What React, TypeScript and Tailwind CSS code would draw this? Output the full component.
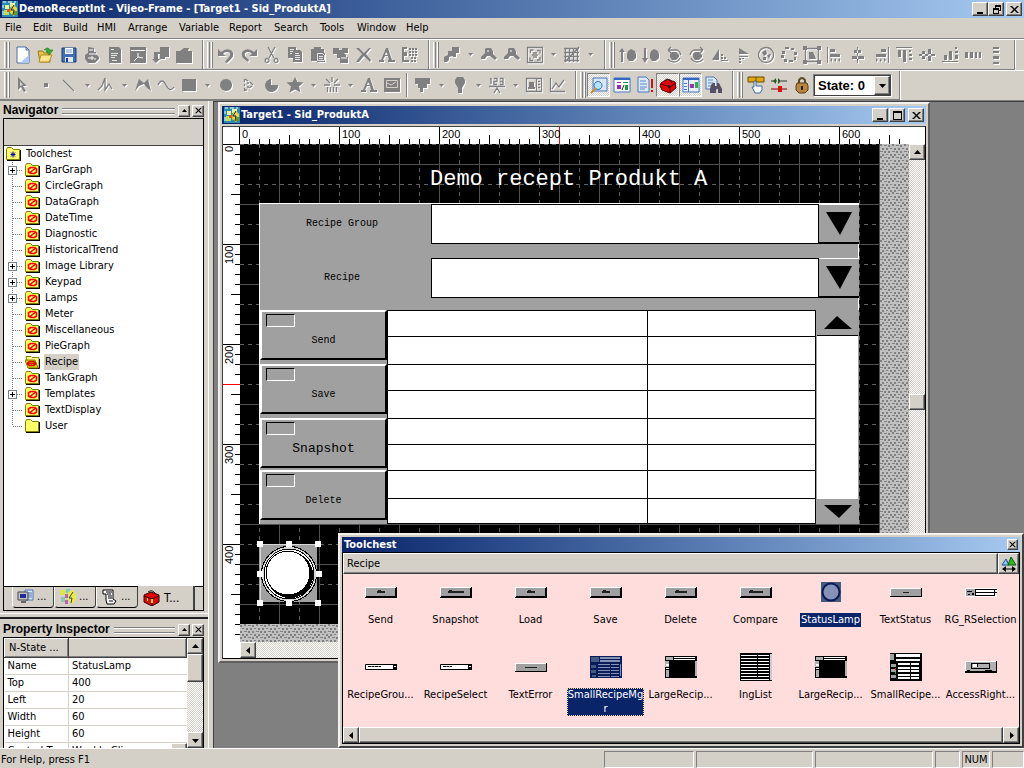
import React from 'react';

const raised = 'border border-t-white border-l-white border-r-[#404040] border-b-[#404040] bg-[#d4d0c8] shadow-[inset_-1px_-1px_0_#808080]';
const checker = 'bg-[repeating-conic-gradient(#ffffff_0_25%,#d4d0c8_0_50%)] bg-[length:2px_2px]';
const uiFont = "font-['DejaVu_Sans_Condensed','Liberation_Sans',sans-serif]";
const titleFont = 'text-[11px] font-bold';
const titleGradient = 'bg-linear-to-r from-[#0a246a] to-[#a6caf0]';

type Glyph = { fill?: string; line?: string; art?: React.ReactNode };

// All toolbar glyphs are drawn in an 18x18 box
const glyphs: Record<string, Glyph> = {
  new: { art: <><path d="M3 1h9l3 3v13H3z" fill="#fff" stroke="#4a6ea8" /><path d="M15 9v8H6z" fill="#a9c8f5" /><path d="M12 1v3h3z" fill="#dce9fb" stroke="#4a6ea8" /></> },
  open: { art: <><path d="M1 5h5l1 2h6v9H3z" fill="#e8c24a" stroke="#a07a18" /><path d="M4 9h11l-3 7H2z" fill="#fbe68c" stroke="#b58d22" /><path d="M7 4q4-4 6 0h3l-4 5-3-4h2" fill="#38a832" stroke="#1c7a1c" strokeWidth=".6" /></> },
  save: { art: <><path d="M2 2h14v14H2z" fill="#3f6fb5" stroke="#173f7e" /><path d="M5 2h8v6H5z" fill="#fff" /><path d="M6 4h6M6 6h6" stroke="#7a9ac8" /><path d="M5 11h8v5H5z" fill="#dfe6ee" /><path d="M6 12h2v4H6z" fill="#173f7e" /></> },
  print: { fill: 'M5 1l6 1v4h2v2l3 3v2l-4 4H5l-3-4V9l3-2z', art: <path d="M6 4h4M8 11h2v2H8zM11 13h2M5 12h2M6 8h7" stroke="#fff" /> },
  preview: { fill: 'M3 1h10l2 2v14H3z', art: <path d="M5 3.500h3M5 7.500h7M5 9.500h6M5 11.500h4M6 14.500h5" stroke="#fff" strokeWidth=".8" /> },
  frame: { fill: 'M1 1h16v16H1z', art: <path d="M2 4.500h14M9 7v4l-4 4M9 11l5 1" stroke="#fff" /> },
  download: { fill: 'M8 1h9v10h-4v2H8V8H6v5h2l-4 4-4-4h2V6h6z' },
  bag: { fill: 'M1 5h4l4-3h5l-1 3h4v12H1z' },
  undo: { fill: 'M1 3l3 3q6-5 11-1 3 4-1 8l-4 4-2-1 4-5q3-5-2-5-3 0-4 2l3 2H1z' },
  redo: { fill: 'M17 3l-3 3Q8 1 3 5q-3 4 1 8l4 3 1-2-4-4q-1-4 3-4 3 0 4 2l-3 2h8z' },
  cut: { line: 'M5 1l6 11M12 1L6 12M4 12.5a2 2 0 1 0 .1 0M13 12.5a2 2 0 1 0 .1 0' },
  copy: { fill: 'M2 1h8v3h4l2 2v10H7v-4H2z', art: <path d="M4 3.500h4M4 5.500h3M4 7.500h2M9 7.500h4M9 9.500h5M9 11.500h5M9 13.500h5" stroke="#fff" strokeWidth=".8" /> },
  paste: { fill: 'M2 3h3V1h7v2h3v3l1 2v8H8v-1H2z', art: <path d="M8.500 7.500h5l2 2v5h-7zM10 10.500h4M10 12.500h4" stroke="#fff" strokeWidth=".8" /> },
  dup: { fill: 'M1 2h6v2h3V2h6v5h-4l2 2v2h2v6H8v-5H5V8H1z', art: <path d="M9 12h6" stroke="#fff" /> },
  del: { fill: 'M1 2h3l5 5 5-5h2l-5 6 5 6-1 2-6-6-5 6H1l6-8z' },
  fontA: { fill: 'M8 2h2l4 12h3v2h-7v-2h1l-1-4H7l-2 4h1v2H1v-2h2zM8 6l-1 3h3z' },
  gridcopy: { fill: 'M1 1h5v2H3v3h3v4H3v4h5v2H1zM8 2h2v2H8zm3 0h2v2h-2zm3 0h2v2h-2zM8 5h2v2H8zm3 0h2v2h-2zm3 0h2v2h-2zM8 8h2v2H8zm3 0h2v2h-2zm3 0h2v2h-2zM10 11h2v2h-2zm3 0h2v2h-2zm-3 3h2v2h-2zm3 0h2v2h-2z' },
  zoomsel: { fill: 'M9 1h7v6h-3v4h-3v-1l-4 1v3l-2 2H1v-5l4-2V5h4z' },
  zoom: { fill: 'M6 2h5l2 3v3l4 4-2 2-5-4H7l-2 3H1v-2l4-4V3z', art: <path d="M7 5h2" stroke="#fff" /> },
  fit: { line: 'M1.500 1.500h15v15h-15zM4.500 7v-3h3M11 4.500h3v3M14 11v3h-3M7 14.500h-3v-3M7 7h4M7 11h4M6 9h6' },
  grid: { line: 'M1 2.500h15M1 6.500h15M1 10.500h15M1 14.500h15M2.500 2v14M6.500 2v14M10.500 2v14M14.500 2v14M2 16L16 1' },
  front: { fill: 'M3 2l3 4H4v10H2V6H0zM9 5l3-2 4 2 1 3v4l-3 3h-4l-2-3V8z' },
  back: { fill: 'M2 2h2v10h2l-3 5-3-5h2zM9 5l3-2 4 2 1 3v4l-3 3h-4l-2-3V8z' },
  rotl: { fill: 'M7 6h4l3 3v2l-3 3H7l-2-3V8z', line: 'M3 4l3-3M3 4l3 3M3 4h9q3 1 4 5M15 12q-2 4-6 4t-6-3' },
  rotr: { fill: 'M7 6h4l3 3v2l-3 3H7l-2-3V8z', line: 'M15 4l-3-3M15 4l-3 3M15 4H6Q3 5 2 9M3 12q2 4 6 4t6-3' },
  fliph: { fill: 'M8 3v11H1zM10 8h2v2h-2zm0 3h2v2h-2zm3 0h2v2h-2zm-3 3h7v1h-7z' },
  flipv: { fill: 'M5 2l10 6H5zM5 10h9v1H5zm0 2h2v2H5zm3 0h2v1H8zm-3 3h2v2H5z' },
  group: { fill: 'M5 6l4-2 1 4-3 2zM10 9l4-1-2 5zM6 11h3v3H6z', line: 'M9 1.500a7.500 7.500 0 1 0 .1 0' },
  ungroup: { fill: 'M5 1h4v2H5zm6 1h3v2h-3zM14 6h3v3h-3zm0 5h2v3h-2zM9 14h4v2H9zM4 13h3v3H4zM1 9h3v3H1zm1-4h3v3H2z' },
  edit: { fill: 'M0 0h4v4H0zM14 0h4v4h-4zM0 14h4v4H0zM14 14h4v4h-4zM6 6h4l2 4 1 3H6z', line: 'M2.500 2.500h13v13h-13z' },
  alignl: { fill: 'M1 1h1v16H1zM4 3h5v3H4zm0 5h10v3H4zM4 14l2-2v4zm4 0l2-2v4zm4 0l2-2v4z' },
  alignc: { fill: 'M8 1h1v16H8zM5 4h7v3H5zM3 10h12v3H3z' },
  alignr: { fill: 'M16 1h1v16h-1zM9 3h5v3H9zM4 8h10v3H4zM4 12l2 2-2 2zm4 0l2 2-2 2zm4 0l2 2-2 2z' },
  alignt: { fill: 'M1 1h16v1H1zM3 4h3v7H3zm5 0h3v12H8zm6 0h2v2h-2zm0 4h3v2h-3zm0 4h3v2h-3z' },
  alignm: { fill: 'M1 8h16v2H1zM4 5h3v8H4zM10 3h3v12h-3z' },
  alignb: { fill: 'M1 15h16v1H1zM3 9h3v5H3zm5-4h3v9H8zm6-4h2v2h-2zm0 4h3v2h-3zm0 4h3v4h-3z' },
  spaceh: { fill: 'M1 6h3v6H1zm5 0h3v6H6zm5 0h2v6h-2zm4 0h2v6h-2z' },
  spacev: { fill: 'M6 1h6v2H6zm0 4h6v2H6zm0 5h6v3H6zm0 6h6v2H6z' },
  cursor: { fill: 'M4 1l9 9H9l3 5-2 1-3-5-3 3z', art: <path d="M6 5v5l3-1z" fill="#d4d0c8" /> },
  dot: { fill: 'M7 7h4v4H7z' },
  lineTool: { line: 'M3 4l11 11' },
  polyline: { line: 'M1 14l4-4 3-8v12l4-6 3 5' },
  polygon: { fill: 'M1 15l4-12 5 4 4-4 3 12-4-3-3-4-5 2z' },
  curve: { line: 'M1 9q4-8 8 0t8 2' },
  rect: { fill: 'M2 3h14v12H2z' },
  circle: { fill: 'M9 3a6 6 0 1 0 .1 0' },
  arc: { line: 'M4.500 3v3M4.500 8v2M4.500 12v3M5 3l3 2M10 6l3 3M12 10l-3 2M7 7h2M7 11h2M5 14h2' },
  pie: { fill: 'M8 3v6h7a6.500 6.500 0 1 1-7-6z' },
  star: { fill: 'M9 1l2.500 5 6 .5-4.500 4 1.500 6L9 13.500 3.500 16.500l1.500-6-4.500-4 6-.5z' },
  rays: { line: 'M9 1v5M3 3l4 4M15 3l-4 4M1 9h6M11 9h6M4.500 11v5M7.500 11v5M10.500 11v5M13.500 11v5' },
  image: { fill: 'M1 2h16v14H1z', art: <path d="M3.500 4.500h11v7h-11zM4 7l4 2 5-3" stroke="#d4d0c8" /> },
  tank: { fill: 'M1 2h15v6h-3v4H9v4H6v-4H4V8H1z' },
  lamp: { fill: 'M6 1h6l2 3v3l-3 5v5H7v-5L4 7V4z' },
  number: { line: 'M3 2v6M2 3h1M6 2.500h3v3H6v3h3M12 2.500h3v6h-3M12 5.500h3M1 10.500h16M6 17l3-5 3 5' },
  panel: { line: 'M1.500 2.500h15v13h-15zM11.500 2v14M13 5.500h2M13 8.500h2M13 11.500h2', fill: 'M4 6h5v5h1v2H3v-2h1z' },
  chart: { line: 'M2.500 2v13.500H17M4 13l4-6 3 4 5-7' },
  find: { art: <><path d="M3 2h14v13H3z" fill="#d7e6fb" stroke="#4b77b9" /><path d="M8 5.500a4 4 0 1 0 .1 0" fill="#b9e1fb" stroke="#2a77b8" /><path d="M6 12l-5 5" stroke="#c98a3c" strokeWidth="2" /></> },
  script: { art: <><path d="M1 2h16v14H1z" fill="#fff" stroke="#4777c5" /><path d="M1 3h16" stroke="#3267c5" strokeWidth="2" /><path d="M4 6.500h4" stroke="#a32bb5" /><path d="M10 6.500h5" stroke="#1c9a3c" /><path d="M12 9h3v5h-3z" fill="#1c9a3c" /><path d="M11 9l-2 5" stroke="#333" /><path d="M4 9h4v4H4z" fill="#8f2bc0" /></> },
  report: { art: <><path d="M2 1h8l3 3v12H2z" fill="#dce9fb" stroke="#4b77b9" /><path d="M4 5h6M4 8h7M4 11h7M4 13h5" stroke="#5b87c9" /><path d="M15 3h2v9h-2zM15 14h2v2h-2z" fill="#d01010" /></> },
  toolbox: { art: <><path d="M2 7l6-4 8 3 1 6-6 5-8-3-2-4z" fill="#e00808" stroke="#600" /><path d="M2 8l9 3 6-4M11 11v5" stroke="#500" /><path d="M6 5q4-4 7 2" stroke="#222" /><path d="M9 9h2v3H9z" fill="#222" /></> },
  layout: { art: <><path d="M1 2h16v14H1z" fill="#e8f0fc" stroke="#4777c5" /><path d="M1 3h16" stroke="#3267c5" strokeWidth="2" /><path d="M6.500 4v12M2 7.500h3M2 10.500h3M2 13.500h3" stroke="#4777c5" /><path d="M8 8h4v4H8z" fill="#a32bb5" /><path d="M13 6h3v6h-3z" fill="#22b83c" /></> },
  search: { art: <><path d="M1 1h8l3 3v9H1z" fill="#dce9fb" stroke="#4b77b9" /><path d="M3 4h5M3 7h6M3 10h4" stroke="#5b87c9" /><path d="M6 9l2-2h2v3h2V7h2l3 6v4h-4v-4h-2v4H5v-4z" fill="#555063" /></> },
  io: { art: <><path d="M1 1h16v5H1z" fill="#e0a808" stroke="#6a4a00" /><path d="M9 1v5" stroke="#6a4a00" /><path d="M7 5h2v5h6v4l-2 3H8l-3-6h2z" fill="#fff" stroke="#3e6a9c" /></> },
  link: { art: <><path d="M1 5h6M11 5h6" stroke="#333" /><path d="M3 5l3-3v6zM8 2l3 3-3 3z" fill="#2a5a22" /><path d="M1 13h16" stroke="#800" /><path d="M8 10h4v6H8z" fill="#e01010" /></> },
  lock: { art: <><path d="M6 8V4q3-4 6 0v4" stroke="#5a4a28" strokeWidth="2" /><path d="M4 7h10l1 3v4l-3 3H6l-3-3v-4z" fill="#b8863c" stroke="#5c3c10" /><path d="M8 10h2v4H8z" fill="#222" /></> },
};

const GlyphIcon = ({ name }: { name: string }) => {
  const g = glyphs[name];
  const shadow = g.fill || g.line ? 'drop-shadow-[1px_1px_0_#ffffff]' : '';
  return (
    <svg width="18" height="18" viewBox="0 0 18 18" fill="none" className={`text-[#808080] ${shadow}`}>
      {g.fill && <path d={g.fill} fill="currentColor" fillRule="evenodd" />}
      {g.line && <path d={g.line} stroke="currentColor" strokeWidth="1.3" />}
      {g.art}
    </svg>
  );
};

const Caret = () => (
  <svg width="5" height="3" viewBox="0 0 5 3" className="drop-shadow-[1px_1px_0_#ffffff]"><path d="M0 0h5L2.500 3z" fill="#808080" /></svg>
);

// "v" is a drop-down caret, "|" a divider, a leading "*" marks a pressed button
const Tool = ({ name }: { name: string }) => {
  if (name === 'v') return <button aria-label="More" className="flex h-6 w-[14px] items-center justify-center"><Caret /></button>;
  if (name === '|') return <span className="mx-[3px] h-6 w-[2px] border-l border-l-[#808080] bg-white" />;
  const pressed = name.startsWith('*');
  const id = pressed ? name.slice(1) : name;
  return (
    <button aria-label={id} className={`flex h-6 w-[23px] items-center justify-center ${pressed ? `border border-t-[#808080] border-l-[#808080] border-r-white border-b-white ${checker}` : ''}`}>
      <GlyphIcon name={id} />
    </button>
  );
};

const ToolGroup = ({ tools, children }: { tools: string[]; children?: React.ReactNode }) => (
  <div className="flex items-center border-r border-b border-[#808080] pr-[7px] pl-1 shadow-[1px_0_0_#ffffff]">
    <span className="mr-px flex h-[26px] w-[6px] gap-[1px]">
      <i className="w-[3px] border-r border-l border-r-[#808080] border-l-white" />
      <i className="w-[3px] border-r border-l border-r-[#808080] border-l-white" />
    </span>
    {tools.map((t, i) => <Tool key={i} name={t} />)}
    {children}
  </div>
);

const Arrow = ({ dir }: { dir: 'up' | 'down' | 'left' | 'right' }) => {
  const d = { up: 'M0 5h7L3.500 1z', down: 'M0 2h7L3.500 6z', left: 'M5 0v7L1 3.500z', right: 'M2 0v7l4-3.500z' }[dir];
  return <svg width="7" height="7" viewBox="0 0 7 7"><path d={d} fill="#000" /></svg>;
};

const ScrollButton = ({ dir }: { dir: 'up' | 'down' | 'left' | 'right' }) => (
  <button aria-label={`Scroll ${dir}`} className={`flex size-4 shrink-0 items-center justify-center ${raised}`}><Arrow dir={dir} /></button>
);

const winMarks: Record<string, string> = {
  Minimize: 'M1 7h6v2H1z',
  Restore: 'M3 0h6v6H7v3H1V3h2zM4 2v1h3v2h1V2zM2 5v3h4V5z',
  Maximize: 'M0 0h9v9H0zM1 2v6h7V2z',
  Close: 'M0 1h2l2.500 2.500L7 1h2L5.500 4.500 9 8H7L4.500 5.500 2 8H0l3.500-3.500z',
};

const WinButton = ({ kind, className = 'h-[14px] w-4', mark = 9 }: { kind: string; className?: string; mark?: number }) => (
  <button aria-label={kind} className={`flex shrink-0 items-center justify-center ${raised} ${className}`}>
    <svg width={mark} height={mark} viewBox="0 0 9 9"><path d={winMarks[kind]} fillRule="evenodd" /></svg>
  </button>
);

const AppIcon = () => (
  <svg width="16" height="16" viewBox="0 0 16 16">
    <path d="M0 0h16v16H0z" fill="#2a8ab0" />
    <path d="M3 4h4v4H3zM8 2h5v4H8z" fill="#e8f4a0" />
    <path d="M9 5l3-1 3 3v5l-3 3-4-3z" fill="#e8d83c" />
    <path d="M2 9h5v5H2z" fill="#b8e05a" />
    <path d="M1 1h3M6 1h4M12 1h2M1 4v3M1 10v4" stroke="#fff" />
    <path d="M5 8h3v3H5z" fill="#e05a1c" />
    <path d="M12 4l-3 5h3l-1 5" stroke="#222" fill="none" />
    <path d="M12 10h3v4h-3z" fill="#6a9a1c" />
  </svg>
);

const menus = [
  ['File', 'w-[28px]'], ['Edit', 'w-[30px]'], ['Build', 'w-[34px]'], ['HMI', 'w-[31px]'], ['Arrange', 'w-[51px]'], ['Variable', 'w-[50px]'],
  ['Report', 'w-[45px]'], ['Search', 'w-[46px]'], ['Tools', 'w-[37px]'], ['Window', 'w-[49px]'], ['Help', 'w-[30px]'],
];

const PanelHeader = ({ title }: { title: string }) => (
  <div className="flex h-[15px] items-center gap-[2px] pr-1">
    <h2 className="font-['Liberation_Sans',sans-serif] text-[12px] leading-[15px] font-bold">{title}</h2>
    <span className="mr-px ml-[2px] h-[6px] flex-1 border-y border-y-[#808080] shadow-[inset_0_1px_0_#ffffff,0_1px_0_#ffffff]" />
    <button aria-label="Collapse" className={`flex h-3 w-3 items-center justify-center ${raised}`}><svg width="5" height="3" viewBox="0 0 5 3"><path d="M0 3h5L2.500 0z" /></svg></button>
    <button aria-label="Close panel" className={`flex h-3 w-3 items-center justify-center ${raised}`}><svg width="7" height="7" viewBox="0 0 9 9"><path d={winMarks.Close} /></svg></button>
  </div>
);

const tree = [
  { name: 'BarGraph', kids: true }, { name: 'CircleGraph' }, { name: 'DataGraph' }, { name: 'DateTime' }, { name: 'Diagnostic' },
  { name: 'HistoricalTrend' }, { name: 'Image Library', kids: true }, { name: 'Keypad', kids: true }, { name: 'Lamps', kids: true },
  { name: 'Meter' }, { name: 'Miscellaneous' }, { name: 'PieGraph' }, { name: 'Recipe', open: true }, { name: 'TankGraph' },
  { name: 'Templates', kids: true }, { name: 'TextDisplay' }, { name: 'User', plain: true },
];

const Folder = ({ mark }: { mark: 'none' | 'star' | 'ban' | 'open' }) => (
  <svg width="15" height="14" viewBox="0 0 15 14" fill="none">
    {mark !== 'open' && <><path d="M1 3l1-2h4l2 2h7v11H1z" fill="#000" /><path d="M.5 2.500l1-2h4l2 2h6v10H.5z" fill="#ffff66" stroke="#808000" /></>}
    {mark === 'star' && <path d="M7 4.500v6M4.500 7.500h5M5 5.500l4 4M9 5.500l-4 4" stroke="#0000c0" />}
    {mark === 'ban' && <path d="M3.500 6l2-1.500h4l2 1.500v3l-2 1.500h-4l-2-1.500zM4.500 10l6-5" stroke="#ff0000" strokeWidth="1.600" />}
    {mark === 'open' && <><path d="M1 1.500h5l1 1h7V13H3z" fill="#ffff88" stroke="#808000" /><path d="M14.500 4v9.500H4" stroke="#000" /><path d="M0 5h10l3 8H3z" fill="#e0d000" stroke="#808000" /><path d="M2.500 8l2-1.500h4l2 1.500v1l-2 1.500h-4L2.500 9zM3 8.500h7" stroke="#e00000" strokeWidth="1.500" /></>}
  </svg>
);

const TreeRow = ({ item, last }: { item: (typeof tree)[number]; last: boolean }) => (
  <li className="flex h-4 items-center">
    <svg width="21" height="16" viewBox="0 0 21 16" fill="none" shapeRendering="crispEdges">
      <path d={last ? 'M8.500 0v8' : 'M8.500 0v16'} stroke="#808080" strokeDasharray="1 1" />
      <path d="M9 8.500h10" stroke="#808080" strokeDasharray="1 1" />
      {item.kids && <><path d="M4.500 4.500h8v8h-8z" fill="#fff" stroke="#808080" /><path d="M6 8.500h5M8.500 6v5" stroke="#000" /></>}
    </svg>
    <Folder mark={item.open ? 'open' : item.plain ? 'none' : 'ban'} />
    <span className={`ml-1 px-px leading-4 ${item.open ? 'bg-[#d4d0c8]' : ''}`}>{item.name}</span>
  </li>
);

const MonitorArt = () => <svg width="18" height="16" viewBox="0 0 18 16"><path d="M8 1h8v10H8z" fill="#dce9fb" stroke="#4b77b9" /><path d="M10 4h5M10 6h5M10 8h5" stroke="#4b77b9" /><path d="M1 3h10v8H1z" fill="#c8c4bc" stroke="#444" /><path d="M3 5h6v4H3z" fill="#1c2ca0" /><path d="M4 12h5v2H4z" fill="#666" /></svg>;
const PaletteArt = () => <svg width="18" height="16" viewBox="0 0 18 16"><path d="M1 1h5v5H1z" fill="#d8e83c" /><path d="M7 0h4v4H7zM2 8h4v5H2z" fill="#88c8b0" /><path d="M6 5h4v4H6zM6 11h3v4H6z" fill="#c060b0" /><path d="M9 3l5-2 3 4v6l-3 4-5-3z" fill="#e8e850" /><path d="M14 3l-4 6h3l-1 5" stroke="#444" fill="none" /></svg>;
const PagesArt = () => <svg width="18" height="16" viewBox="0 0 18 16"><path d="M2 1h10v9l3 2-2 3H6l-1-4V5H2z" fill="#fff" stroke="#000" /><path d="M5 3h6M6 5h4M7 7h4M7 9h4M8 12h4" stroke="#000" /></svg>;
const ToolboxArt = () => <svg width="18" height="16" viewBox="0 0 18 16"><path d="M2 5l7-3 8 3v7l-7 4-8-4z" fill="#e00808" stroke="#300" /><path d="M2 6l8 3 7-3M10 9v7" stroke="#300" fill="none" /><path d="M6 2q4-3 7 1" stroke="#222" fill="none" /><path d="M9 9h2v4H9zM5 8h1v3H5z" fill="#ffe820" /></svg>;

const tabs = [<MonitorArt />, <PaletteArt />, <PagesArt />];

const Navigator = () => (
  <section className="flex min-h-0 flex-1 flex-col pt-[2px] pb-[2px] pl-[3px]">
    <PanelHeader title="Navigator" />
    <div className="mr-1 flex min-h-0 flex-1 flex-col border border-black bg-white">
      <div className="h-[27px] shrink-0 border-b border-[#404040] bg-[#d4d0c8]" />
      <ul className="min-h-0 flex-1 overflow-hidden">
        <li className="flex h-4 items-center pl-[2px]"><Folder mark="star" /><span className="ml-1 px-px leading-4">Toolchest</span></li>
        {tree.map((item, i) => <TreeRow key={item.name} item={item} last={i === tree.length - 1} />)}
      </ul>
      <div className="flex h-6 shrink-0 items-start border-t border-black bg-[#d4d0c8] pl-2">
        {tabs.map((art, i) => (
          <button key={i} className="flex h-[21px] w-[42px] items-center gap-[2px] rounded-b-sm border-r border-b border-l border-r-[#404040] border-b-black border-l-white pl-1">{art}...</button>
        ))}
        <button className="-mt-px flex h-6 w-[57px] items-center gap-1 border-r-2 border-[#404040] bg-[#d4d0c8] pl-1 text-[12px]"><ToolboxArt />T...</button>
      </div>
    </div>
  </section>
);

const properties = [['Name', 'StatusLamp'], ['Top', '400'], ['Left', '20'], ['Width', '60'], ['Height', '60'], ['Control Type', 'Weekly Clip']];

const PropertyInspector = () => (
  <section className="flex h-[127px] shrink-0 flex-col pt-px pl-[3px]">
    <PanelHeader title="Property Inspector" />
    <div className="mr-1 flex min-h-0 flex-1 overflow-hidden border-x border-t border-black bg-white">
      <div className="flex-1 overflow-hidden">
        <table className="w-full table-fixed border-collapse">
          <thead>
            <tr className="h-[19px]">
              <th className={`w-16 pl-1 text-left leading-4 font-normal whitespace-nowrap ${raised}`}>N-State ...</th>
              <th className={raised} aria-label="Value" />
            </tr>
          </thead>
          <tbody>
            {properties.map(([k, v]) => (
              <tr key={k} className="h-[17px] border-b border-[#d4d0c8]">
                <td className="overflow-hidden border-r border-[#d4d0c8] pl-[3px] leading-4 whitespace-nowrap">{k}</td>
                <td className="pl-[3px] leading-4 whitespace-nowrap">
                  <span className="flex justify-between">{v}{k === 'Control Type' && <button aria-label="Choose control type" className={`h-4 w-4 ${raised}`} />}</span>
                </td>
              </tr>
            ))}
          </tbody>
        </table>
      </div>
      <div className={`flex w-4 flex-col ${checker}`}>
        <ScrollButton dir="up" />
        <span className={`h-[28px] ${raised}`} />
        <span className="flex-1" />
        <ScrollButton dir="down" />
      </div>
    </div>
  </section>
);

const rulerTicks = (count: number) => Array.from({ length: count }, (_, i) => i * 10);
const tickLength = (v: number) => (v % 100 === 0 ? 17 : v % 50 === 0 ? 9 : 5);

const TopRuler = () => (
  <svg className="h-[17px] w-full bg-white" shapeRendering="crispEdges">
    {rulerTicks(67).map(v => <path key={v} d={`M${v + 16.5} 17v-${tickLength(v)}`} stroke="#000" />)}
    <path d="M336.500 0v17" stroke="#f00" />
    {[0, 100, 200, 300, 400, 500, 600].map(v => <text key={v} x={v + 19} y="11" className="font-['Liberation_Sans',sans-serif] text-[11px]">{v}</text>)}
  </svg>
);

const SideRuler = () => (
  <svg className="h-full w-[17px] shrink-0 bg-white" shapeRendering="crispEdges">
    {rulerTicks(50).map(v => <path key={v} d={`M17 ${v + 0.5}h-${tickLength(v)}`} stroke="#000" />)}
    <path d="M0 240.500h17" stroke="#f00" />
    {[0, 100, 200, 300, 400].map(v => <text key={v} transform={`translate(10 ${v + (v ? 20 : 8)}) rotate(-90)`} className="font-['Liberation_Sans',sans-serif] text-[11px]">{v}</text>)}
  </svg>
);

const GridBackdrop = () => (
  <svg className="absolute inset-0 h-full w-full" shapeRendering="crispEdges">
    <defs>
      <pattern id="hatch" width="12" height="12" patternUnits="userSpaceOnUse">
        <path d="M0 0h12v12H0z" fill="#c0c0c0" />
        <path d="M0 1h2v2H0zM4 0h2v2H4zM8 1h3v1H8zM2 4h2v1H2zM6 4h2v2H6zM10 4h2v2h-2zM0 7h2v2H0zM4 7h3v1H4zM8 7h2v2H8zM2 10h2v2H2zM6 10h2v2H6zM10 10h2v1h-2z" fill="#808080" />
      </pattern>
      <pattern id="grid" width="40" height="40" patternUnits="userSpaceOnUse">
        <path d="M39.500 0v40M0 20.500h40" stroke="#505050" />
        <path d="M19.500 0v40M0 .5h40" stroke="#606060" strokeDasharray="4 4" />
      </pattern>
    </defs>
    <rect width="100%" height="100%" fill="url(#hatch)" />
    <rect width="640" height="480" fill="#000" />
    <rect width="640" height="480" fill="url(#grid)" />
  </svg>
);

const RecipePicker = ({ id, label, spacer }: { id: string; label: string; spacer: string }) => (
  <>
    <div className="flex h-10">
      <label htmlFor={id} className="w-[171px] pr-[7px] text-center leading-10">{label}</label>
      <input id={id} readOnly className="w-0 flex-1 border border-black bg-white" />
      <button aria-label={`Open ${label}`} className="flex w-10 items-center justify-center border-t border-b-2 border-t-white border-b-black bg-[#a0a0a0]">
        <svg width="26" height="23" viewBox="0 0 26 23"><path d="M0 0h26L14 23z" /></svg>
      </button>
    </div>
    <div className={`ml-[171px] border-r border-white ${spacer}`} />
  </>
);

const recipeActions = [
  { label: 'Send', gap: 'mb-[4px]', size: 'text-[10px]' },
  { label: 'Save', gap: 'mb-[4px]', size: 'text-[10px]' },
  { label: 'Snapshot', gap: 'mb-[2px]', size: 'text-[13px]' },
  { label: 'Delete', gap: 'mb-0', size: 'text-[10px]' },
];
const ingredientRows = ['h-[26px]', 'h-[28px]', 'h-[26px]', 'h-[28px]', 'h-[26px]', 'h-[26px]', 'h-[28px]', 'h-[25px]'];

const RecipeManager = () => (
  <div className="absolute top-[60px] left-[19px] w-[600px] border-l border-white bg-[#a0a0a0] font-['Liberation_Mono',monospace] text-[10px] shadow-[0_-1px_0_#ffffff]">
    <RecipePicker id="recipe-group" label="Recipe Group" spacer="h-[14px]" />
    <RecipePicker id="recipe" label="Recipe" spacer="h-[12px]" />
    <div className="flex">
      <div className="w-[127px]">
        {recipeActions.map(a => (
          <button key={a.label} className={`flex h-[50px] w-full flex-col justify-between border-2 border-t-white border-l-white border-r-black border-b-black pt-[2px] pb-2 ${a.gap}`}>
            <span className="ml-1 block h-[13px] w-[29px] border border-t-black border-l-black border-r-white border-b-white" />
            <span className={`block w-full text-center leading-[18px] ${a.size}`}>{a.label}</span>
          </button>
        ))}
      </div>
      <table className="w-0 flex-1 border-collapse border border-black bg-white">
        <tbody>
          {ingredientRows.map((h, i) => <tr key={i} className={h}><td className="w-[260px] border border-black" /><td className="w-[168px] border border-black" /></tr>)}
        </tbody>
      </table>
      <div className="flex w-[43px] flex-col border-x border-x-[#a0a0a0] bg-white">
        <button aria-label="Previous rows" className="flex h-[26px] items-center justify-center border-b border-black bg-[#a0a0a0]"><svg width="28" height="13" viewBox="0 0 28 13"><path d="M0 13h28L13 0z" /></svg></button>
        <span className="flex-1" />
        <button aria-label="Next rows" className="flex h-[25px] items-center justify-center bg-[#a0a0a0]"><svg width="28" height="13" viewBox="0 0 28 13"><path d="M0 0h28L15 13z" /></svg></button>
      </div>
    </div>
  </div>
);

const StatusLamp = () => (
  <svg className="absolute top-[396px] left-[15px]" width="68" height="68" viewBox="0 0 68 68" shapeRendering="crispEdges">
    <path d="M4 4h58v58H4z" fill="#a0a0a0" />
    <path d="M5.500 62V4.500h57" stroke="#d8d8d8" fill="none" />
    <circle cx="34" cy="34" r="27.500" fill="#d8d8d8" stroke="#000" />
    <circle cx="34" cy="34" r="25" fill="#fff" stroke="#000" />
    <circle cx="35" cy="35" r="23" fill="#000" />
    <circle cx="33" cy="33" r="22" fill="#fff" stroke="#000" />
    {[[2, 1], [31, 1], [60, 1], [2, 31], [61, 31], [2, 60], [31, 60], [60, 60]].map(([x, y]) => <rect key={`${x}-${y}`} x={x} y={y} width="6" height="6" fill="#fff" />)}
  </svg>
);

const EditorWindow = () => (
  <section className="absolute top-0 left-1 flex h-[561px] w-[712px] flex-col border-2 border-t-[#f4f2ee] border-l-[#f4f2ee] border-r-[#606060] border-b-[#606060] bg-[#d4d0c8] p-[2px]">
    <header className={`flex h-[18px] shrink-0 items-center gap-px px-[2px] text-white ${titleGradient}`}>
      <AppIcon />
      <h2 className={`flex-1 leading-4 ${titleFont}`}>Target1 - Sid_ProduktA</h2>
      <WinButton kind="Minimize" /><WinButton kind="Maximize" /><WinButton kind="Close" className="ml-[2px] h-[14px] w-4" />
    </header>
    <div className="mt-[2px] flex min-h-0 flex-1 flex-col border border-t-[#404040] border-l-[#404040] border-r-black border-b-black">
      <TopRuler />
      <div className="flex min-h-0 flex-1">
        <SideRuler />
        <div className="flex min-w-0 flex-1 flex-col">
          <div className="flex min-h-0 flex-1">
            <div className="relative min-w-0 flex-1 overflow-hidden">
              <GridBackdrop />
              <h1 className="absolute top-[20px] left-[190px] font-['Liberation_Mono',monospace] text-[22px] leading-8 whitespace-nowrap text-white">Demo recept Produkt A</h1>
              <RecipeManager />
              <StatusLamp />
            </div>
            <div className={`flex w-4 flex-col ${checker}`}>
              <ScrollButton dir="up" />
              <span className={`mt-[234px] h-4 ${raised}`} />
              <span className="flex-1" />
              <ScrollButton dir="down" />
            </div>
          </div>
          <div className={`flex h-4 ${checker}`}><ScrollButton dir="left" /></div>
        </div>
      </div>
    </div>
  </section>
);

const ButtonThumb = ({ ink }: { ink: number }) => (
  <svg width="32" height="11" viewBox="0 0 32 11" shapeRendering="crispEdges"><path d="M0 0h32v11H0z" /><path d="M0 0h31v1H1v9H0z" fill="#fff" /><path d="M1 1h29v8H1z" fill="#a0a0a0" /><path d={`M${16 - Math.floor(ink / 2)} 4h${ink}v2h-${ink}zM${17 - Math.floor(ink / 2)} 3h3v1h-3z`} fill="#222" /></svg>
);
const TextThumb = ({ ink }: { ink: number }) => (
  <svg width="32" height="9" viewBox="0 0 32 9" shapeRendering="crispEdges"><path d="M0 0h32v9H0z" /><path d="M0 0h31v1H1v7H0z" fill="#fff" /><path d="M1 1h30v7H1z" fill="#a0a0a0" /><path d={`M${16 - Math.floor(ink / 2)} 4h${ink}v1h-${ink}z`} fill="#222" /></svg>
);
const SelectThumb = ({ ink }: { ink: number }) => (
  <svg width="32" height="6" viewBox="0 0 32 6"><path d="M.5.5h31v5H.5z" fill="#fff" stroke="#000" /><path d={`M3 2.500h${ink}`} stroke="#000" strokeDasharray="3 .5" /><path d="M28 0h4v6h-4z" /><path d="M29 2h2v1h-2z" fill="#fff" /></svg>
);
const PairThumb = () => (
  <svg width="32" height="9" viewBox="0 0 32 9" shapeRendering="crispEdges"><path d="M0 0h32v9H0z" fill="#fff" /><path d="M1 1h9v7H1z" fill="#a0a0a0" /><path d="M10 1h22v1H10zM10 4h22v1H10zM10 7h20v1H10zM10 1h1v7h-1zM29 1h1v7h-1z" /><path d="M2 3h5v1H2zM3 6h2v1H3zM7 5h2v2H7z" /></svg>
);
const LampThumb = () => (
  <svg width="20" height="20" viewBox="0 0 20 20"><path d="M0 0h20v20H0z" fill="#455a80" /><circle cx="10" cy="10" r="8.500" fill="#8492b8" stroke="#0a1c58" strokeWidth="2" /></svg>
);
const ManagerThumb = ({ paper, ink, frame }: { paper: string; ink: string; frame: string }) => (
  <svg width="32" height="22" viewBox="0 0 32 22"><path d="M0 0h32v22H0z" fill={ink} /><path d="M1 1h8v5H1zM1 9h5v3H1zM1 14h5v3H1zM2 19h4v2H2z" fill={frame} /><path d="M10 1h20v2H10zM10 4h20v2H10zM8 8h12v1H8zm0 3h12v1H8zm0 3h12v1H8zm0 3h12v1H8zm0 3h12v1H8zM21 8h8v1h-8zm0 3h8v1h-8zm0 3h8v1h-8zm0 3h8v1h-8zm0 3h8v1h-8zM30 8h1v12h-1z" fill={paper} /></svg>
);
const LargeThumb = () => (
  <svg width="32" height="22" viewBox="0 0 32 22"><path d="M0 0h32v22H0z" /><path d="M1 1h7v3H1zM0 5h4v6H0zM1 14h3v7H1zM30 5h2v15h-2z" fill="#b0b0b0" /><path d="M9 1h21v1H9zM9 3h21v1H9zM1 8h3v2H1zM1 12h3v1H1z" fill="#fff" /></svg>
);
const ListThumb = () => (
  <svg width="32" height="28" viewBox="0 0 32 28" shapeRendering="crispEdges"><path d="M0 0h32v28H0z" /><path d="M1 2.500h16M18 2.500h11M1 5.500h16M18 5.500h11M1 8.500h16M18 8.500h11M1 11.500h16M18 11.500h11M1 14.500h16M18 14.500h11M1 17.500h16M18 17.500h11M1 20.500h16M18 20.500h11M1 23.500h16M18 23.500h11M1 26.500h28" stroke="#fff" /><path d="M30 1h2v26h-2z" fill="#ccc" /></svg>
);
const SmallThumb = () => (
  <svg width="32" height="28" viewBox="0 0 32 28" shapeRendering="crispEdges"><path d="M0 0h32v28H0z" /><path d="M6 1h24v3H6zM6 6h24v2H6zM8 10h12v2H8zm0 4h12v2H8zm0 3h12v2H8zm0 4h12v2H8zm0 3h12v2H8zM21 10h8v2h-8zm0 4h8v2h-8zm0 3h8v2h-8zm0 4h8v2h-8zm0 3h8v2h-8z" fill="#fff" /><path d="M0 1h4v6H0zM1 11h5v3H1zM1 16h5v3H1zM1 22h5v3H1z" fill="#a0a0a0" /><path d="M5 15h1v2H5z" fill="#e02020" /><path d="M5 19h1v2H5z" fill="#20a040" /></svg>
);
const AccessThumb = () => (
  <svg width="32" height="12" viewBox="0 0 32 12" shapeRendering="crispEdges"><path d="M0 0h32v12H0z" /><path d="M0 0h31v10H0z" fill="#b0b0b0" /><path d="M6 2h19v1H6zM6 2h1v6H6zM6 7h19v1H6zM24 2h1v6h-1zM12 2h1v4h-1zM2 9h3v1H2zM20 9h7v2h-7z" /><path d="M8 3h4v3H8zM0 0h31v1H1v9H0z" fill="#fff" /></svg>
);

type ChestItem = { name: string; thumb: React.ReactNode; selected?: 'plain' | 'focus' };
const chest: ChestItem[] = [
  { name: 'Send', thumb: <ButtonThumb ink={8} /> },
  { name: 'Snapshot', thumb: <ButtonThumb ink={16} /> },
  { name: 'Load', thumb: <ButtonThumb ink={8} /> },
  { name: 'Save', thumb: <ButtonThumb ink={8} /> },
  { name: 'Delete', thumb: <ButtonThumb ink={12} /> },
  { name: 'Compare', thumb: <ButtonThumb ink={14} /> },
  { name: 'StatusLamp', thumb: <LampThumb />, selected: 'plain' },
  { name: 'TextStatus', thumb: <TextThumb ink={6} /> },
  { name: 'RG_RSelection', thumb: <PairThumb /> },
  { name: 'RecipeGrou...', thumb: <SelectThumb ink={13} /> },
  { name: 'RecipeSelect', thumb: <SelectThumb ink={9} /> },
  { name: 'TextError', thumb: <TextThumb ink={12} /> },
  { name: 'SmallRecipeMgr', thumb: <ManagerThumb paper="#8492b8" ink="#0a1c58" frame="#455a80" />, selected: 'focus' },
  { name: 'LargeRecip...', thumb: <LargeThumb /> },
  { name: 'IngList', thumb: <ListThumb /> },
  { name: 'LargeRecip...', thumb: <LargeThumb /> },
  { name: 'SmallRecipe...', thumb: <SmallThumb /> },
  { name: 'AccessRight...', thumb: <AccessThumb /> },
];

const ToolchestWindow = () => (
  <section className="absolute right-0 bottom-0 flex h-[215px] w-[686px] flex-col border-2 border-t-[#f4f2ee] border-l-[#f4f2ee] border-r-[#404040] border-b-[#404040] bg-[#d4d0c8] p-[2px]">
    <header className={`flex h-[15px] shrink-0 items-center px-[2px] text-white ${titleGradient}`}>
      <h2 className={`flex-1 leading-[15px] ${titleFont}`}>Toolchest</h2>
      <WinButton kind="Close" className="size-[11px]" mark={7} />
    </header>
    <div className="flex min-h-0 flex-1 flex-col border border-black">
      <div className="flex h-[21px] shrink-0">
        <div className={`flex-1 pl-[3px] leading-[19px] ${raised}`}>Recipe</div>
        <button aria-label="Swap view" className={`flex w-[21px] items-center justify-center ${raised}`}>
          <svg width="16" height="16" viewBox="0 0 16 16"><path d="M1 9l4-6 3 6zM6 5l2 4" fill="#8ad0f0" stroke="#1c4ca0" /><path d="M7 9l3-8 5 8z" fill="#30b820" stroke="#0a5a0a" /><path d="M3 13h10" stroke="#000" /><path d="M1 13l4-3v6zM15 13l-4-3v6z" /></svg>
        </button>
      </div>
      <div className="grid min-h-0 flex-1 auto-rows-[75px] grid-cols-[repeat(9,75px)] bg-[#ffdddd]">
        {chest.map((item, i) => (
          <button key={i} className="flex flex-col items-center">
            <span className="mb-[3px] flex h-9 items-center">{item.thumb}</span>
            <span className={`leading-[14px] ${item.selected ? 'bg-[#0a246a] text-white' : 'whitespace-nowrap'} ${item.selected === 'focus' ? 'w-[77px] break-all outline-1 -outline-offset-1 outline-dotted outline-[#f5db95]' : 'px-px'}`}>{item.name}</span>
          </button>
        ))}
      </div>
      <div className={`flex h-4 shrink-0 ${checker}`}>
        <ScrollButton dir="left" /><span className={`flex-1 ${raised}`} /><ScrollButton dir="right" />
      </div>
    </div>
  </section>
);

const statusCells = ['w-[90px]', 'w-[117px]', 'w-[118px]', 'w-[25px]'];
const sunken = 'border border-t-[#808080] border-l-[#808080] border-r-white border-b-white';

export default function App() {
  return (
    <div className={`flex h-screen flex-col overflow-hidden bg-[#d4d0c8] text-[11px] text-black select-none ${uiFont}`}>
      <header className={`flex h-[18px] shrink-0 items-center px-[2px] text-white ${titleGradient}`}>
        <AppIcon />
        <h1 className={`ml-px flex-1 leading-[18px] ${titleFont}`}>DemoReceptInt - Vijeo-Frame - [Target1 - Sid_ProduktA]</h1>
        <WinButton kind="Minimize" /><WinButton kind="Restore" /><WinButton kind="Close" className="ml-[2px] h-[14px] w-4" />
      </header>
      <nav className="flex h-[21px] shrink-0 items-center border-b border-[#808080] pt-px pl-[5px]">
        {menus.map(([m, w]) => <button key={m} className={`text-left whitespace-nowrap ${w}`}>{m}</button>)}
      </nav>
      <div className="flex h-[31px] shrink-0 border-t border-white">
        <ToolGroup tools={['new', 'open', 'save', 'print', 'preview', 'frame', 'download', 'bag']} />
        <ToolGroup tools={['undo', 'redo', 'cut', 'copy', 'paste', 'dup', 'del', 'fontA', 'gridcopy']} />
        <ToolGroup tools={['zoomsel', 'v', 'zoom', 'zoom', 'fit', 'v', 'grid', 'v']} />
        <ToolGroup tools={['front', 'back', 'rotl', 'rotr', 'fliph', 'flipv', 'group', 'ungroup', 'edit', 'alignl', 'alignc', 'alignr', 'alignt', 'alignm', 'alignb', 'spaceh', 'spacev']} />
      </div>
      <div className="flex h-[31px] shrink-0 border-t border-b border-t-white border-b-[#808080]">
        <ToolGroup tools={['cursor', 'dot', 'lineTool', 'v', 'polyline', 'v', 'polygon', 'curve', 'rect', 'v', 'circle', 'arc', 'pie', 'star', 'v', 'rays', 'v', 'fontA', 'image', '|', 'tank', 'v', 'lamp', 'v', 'number', 'v', 'panel', 'chart']} />
        <ToolGroup tools={['*find', 'script', 'report', '*toolbox', '*layout', 'search']} />
        <ToolGroup tools={['io', 'link', 'lock']}>
          <label className={`relative flex h-[23px] w-[79px] bg-white ${sunken}`}>
            <select aria-label="State" className="w-full appearance-none border border-[#404040] pl-[3px] font-['Liberation_Sans',sans-serif] text-[13px] font-bold">
              <option>State: 0</option>
            </select>
            <span className={`pointer-events-none absolute top-px right-px bottom-px flex w-4 items-center justify-center ${raised}`}><Arrow dir="down" /></span>
          </label>
        </ToolGroup>
      </div>
      <div className="flex min-h-0 flex-1">
        <aside className="flex w-[208px] shrink-0 flex-col">
          <Navigator />
          <div className="mb-[2px] h-[6px] shrink-0 border-t border-b-2 border-t-white border-b-[#202020]" />
          <PropertyInspector />
        </aside>
        <div className="w-[6px] shrink-0 border-r border-l border-r-[#404040] border-l-white" />
        <main className="relative min-w-0 flex-1 overflow-hidden border-t border-[#404040] bg-[#808080]">
          <EditorWindow />
          <ToolchestWindow />
        </main>
      </div>
      <footer className="flex h-5 shrink-0 items-stretch gap-[2px] border-t border-white pl-px">
        <p className="flex-1 leading-[21px]">For Help, press F1</p>
        {statusCells.map((w, i) => <span key={i} className={`mt-[2px] ${w} ${sunken}`} />)}
        <span className={`mt-[2px] w-[28px] text-center leading-4 ${sunken}`}>NUM</span>
        <span className={`mt-[2px] w-[32px] ${sunken}`} />
      </footer>
    </div>
  );
}
